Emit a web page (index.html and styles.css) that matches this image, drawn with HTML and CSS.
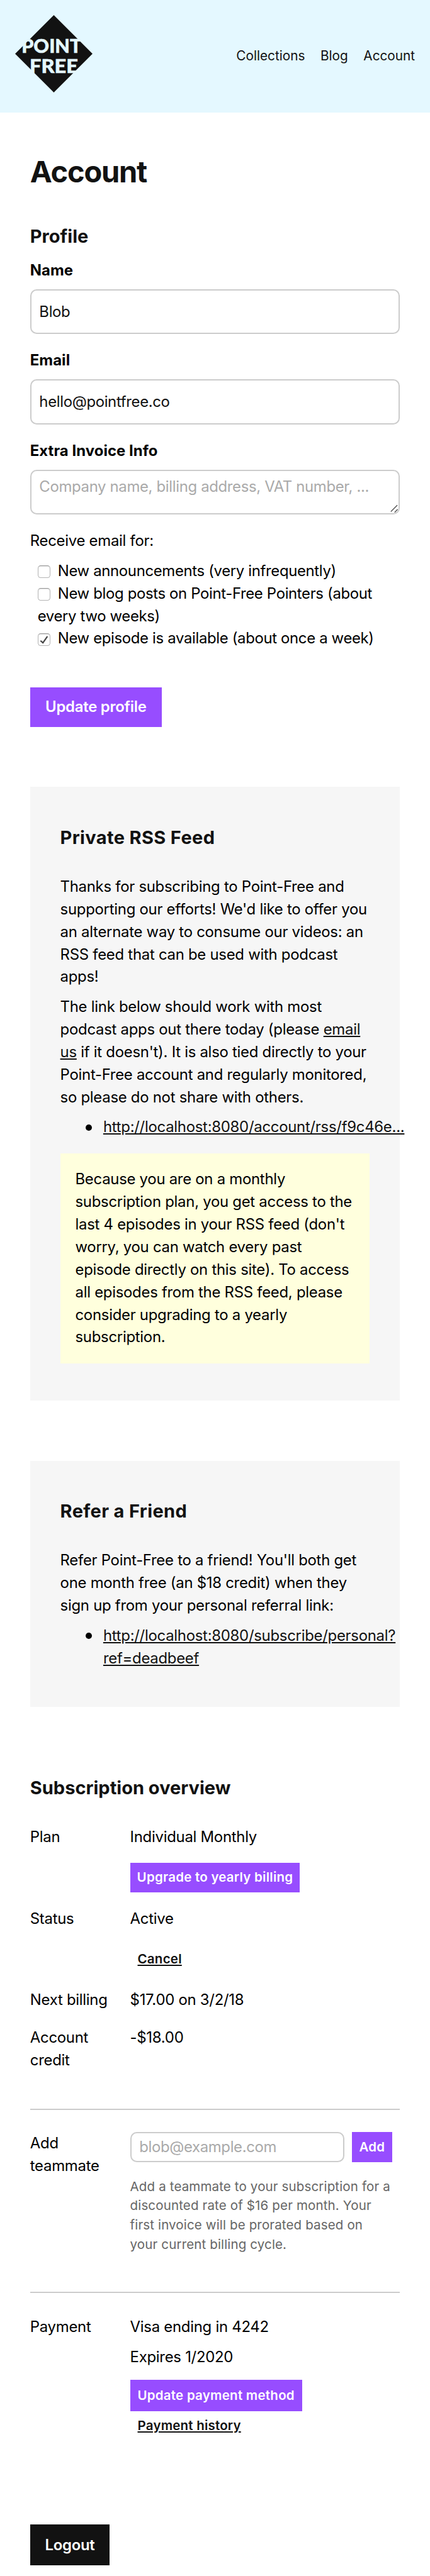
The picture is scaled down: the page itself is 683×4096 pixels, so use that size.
FILE: index.html
```html
<!DOCTYPE html>
<html lang="en">
<head>
<meta charset="utf-8">
<title>Account</title>
<link rel="stylesheet" href="styles.css">
</head>
<body>
<header class="header">
  <svg class="logo" viewBox="0 0 144 144" aria-label="Point-Free">
    <path class="logo-diamond" d="M72 0L144 72L72 144L0 72Z"/>
    <text class="logo-text" x="12" y="70.7" textLength="111.5" lengthAdjust="spacingAndGlyphs">POINT</text>
    <text class="logo-text" x="27" y="107.3" textLength="90" lengthAdjust="spacingAndGlyphs">FREE</text>
  </svg>
  <nav class="nav"><a>Collections</a><a>Blog</a><a>Account</a></nav>
</header>
<main class="main">
  <h1 class="title">Account</h1>
  <h2 class="heading">Profile</h2>
  <form class="form">
    <label class="label" for="name">Name</label>
    <input class="input" id="name" value="Blob">
    <label class="label" for="email">Email</label>
    <input class="input" id="email" value="hello@pointfree.co">
    <label class="label" for="info">Extra Invoice Info</label>
    <div class="textarea"><span>Company name, billing address, VAT number, ...</span>
      <svg class="grip" viewBox="0 0 16 16"><path d="M3.300 14.700L15.300 2.700M10.300 16L16 10.300"/></svg>
    </div>
    <p class="receive">Receive email for:</p>
    <div class="checks">
      <label class="check-row"><span class="check"></span> New announcements (very infrequently)</label>
      <label class="check-row"><span class="check"></span> New blog posts on Point-Free Pointers (about every two weeks)</label>
      <label class="check-row"><span class="check"><svg viewBox="1 1 22 22"><path d="M5 14L9.700 18L18.300 5.700"/></svg></span> New episode is available (about once a week)</label>
    </div>
    <button class="button" type="button">Update profile</button>
  </form>

  <section class="card">
    <h2 class="heading">Private RSS Feed</h2>
    <p>Thanks for subscribing to Point-Free and supporting our efforts! We'd like to offer you an alternate way to consume our videos: an RSS feed that can be used with podcast apps!</p>
    <p>The link below should work with most podcast apps out there today (please <a class="link">email us</a> if it doesn't). It is also tied directly to your Point-Free account and regularly monitored, so please do not share with others.</p>
    <ul class="links"><li><a class="link">http://localhost:8080/account/rss/f9c46e...</a></li></ul>
    <p class="notice">Because you are on a monthly subscription plan, you get access to the last 4 episodes in your RSS feed (don't worry, you can watch every past episode directly on this site). To access all episodes from the RSS feed, please consider upgrading to a yearly subscription.</p>
  </section>

  <section class="card">
    <h2 class="heading">Refer a Friend</h2>
    <p>Refer Point-Free to a friend! You'll both get one month free (an $18 credit) when they sign up from your personal referral link:</p>
    <ul class="links"><li><a class="link">http://localhost:8080/subscribe/personal?<br>ref=deadbeef</a></li></ul>
  </section>

  <section class="subscription">
    <h2 class="heading">Subscription overview</h2>
    <div class="rows">
      <div class="row"><div>Plan</div><div>
        <p>Individual Monthly</p>
        <button class="button small upgrade" type="button">Upgrade to yearly billing</button>
      </div></div>
      <div class="row"><div>Status</div><div>
        <p>Active</p>
        <button class="button small text" type="button">Cancel</button>
      </div></div>
      <div class="row"><div>Next billing</div><div>$17.00 on 3/2/18</div></div>
      <div class="row"><div>Account credit</div><div>-$18.00</div></div>
    </div>
    <div class="rows ruled">
      <div class="row"><div>Add teammate</div><div>
        <div class="invite">
          <input class="input input-small" placeholder="blob@example.com">
          <button class="button small add" type="button">Add</button>
        </div>
        <p class="hint">Add a teammate to your subscription for a discounted rate of $16 per month. Your first invoice will be prorated based on your current billing cycle.</p>
      </div></div>
    </div>
    <div class="rows ruled payment">
      <div class="row"><div>Payment</div><div>
        <p>Visa ending in 4242</p>
        <p class="expires">Expires 1/2020</p>
        <button class="button small update" type="button">Update payment method</button>
        <a class="history link">Payment history</a>
      </div></div>
    </div>
  </section>
  <button class="button logout" type="button">Logout</button>
</main>
</body>
</html>
```
FILE: styles.css
```css
html {
  font-size: 27.32px;
}

* {
  box-sizing: border-box;
}

body {
  margin: 0;
  background: #fff;
  color: #000;
  font: .875rem/1.3125rem Inter, "Liberation Sans", sans-serif;
  letter-spacing: -.011em;
}

h1, h2, p, ul {
  margin: 0;
}

.header {
  display: flex;
  justify-content: space-between;
  height: 6.5625rem;
  padding: .875rem;
  background: #e4f8ff;
}

.logo {
  width: 4.5rem;
  height: 4.5rem;
}

.logo-diamond {
  fill: #121212;
}

.logo-text {
  fill: #e4f8ff;
  stroke: #e4f8ff;
  stroke-width: .6;
  font: 900 35px Lato, sans-serif;
  letter-spacing: 0;
}

.nav {
  display: flex;
  gap: .9rem;
  padding-top: 1.82rem;
  color: #121212;
  font-size: .76rem;
  line-height: 1.125rem;
  letter-spacing: 0;
}

.main {
  padding: 2.333rem 1.75rem 0;
}

.title {
  color: #121212;
  font-size: 1.72rem;
  font-weight: 700;
  line-height: 2.1875rem;
  letter-spacing: -.026em;
}

.heading {
  color: #121212;
  font-size: 1.0625rem;
  font-weight: 700;
  line-height: 1.40625rem;
  letter-spacing: 0;
}

.title + .heading {
  margin-top: 1.98rem;
}

.form {
  padding-top: .61rem;
}

.label {
  display: block;
  margin-bottom: .4375rem;
  font-weight: 700;
  letter-spacing: .002em;
}

.input,
.textarea {
  display: block;
  width: 100%;
  height: 2.625rem;
  margin: 0 0 .875rem;
  padding: 0 .46rem;
  border: 2px solid #ccc;
  border-radius: .375rem;
  background: #fff;
  color: #121212;
  font: inherit;
  letter-spacing: -.014em;
  outline: none;
}

.textarea {
  position: relative;
  padding-top: .28rem;
  color: #aaa;
}

.grip {
  position: absolute;
  right: .06rem;
  bottom: .06rem;
  width: .5rem;
  height: .5rem;
  fill: none;
  stroke: #555;
  stroke-width: 1.7;
}

.input::placeholder {
  color: #aaa;
  opacity: 1;
}

.receive {
  margin-bottom: .4375rem;
}

.checks {
  padding-left: .4375rem;
  letter-spacing: -.014em;
}

.check-row {
  display: block;
}

.check {
  display: inline-block;
  width: .74rem;
  height: .74rem;
  margin-right: .2rem;
  border: 1px solid #b4b4b4;
  border-top-color: #999;
  border-radius: .17rem;
  box-shadow: inset 0 1px 1px #ddd;
  vertical-align: -.125rem;
}

.check svg {
  display: block;
  width: 100%;
  height: 100%;
  fill: none;
  stroke: #444;
  stroke-width: 2.6;
}

.button {
  display: block;
  height: 2.3125rem;
  padding: 0;
  border: 0;
  background: #974dff;
  color: #fff;
  font: 600 .875rem/1.3125rem Inter, "Liberation Sans", sans-serif;
  letter-spacing: -.01em;
  text-align: center;
}

.form .button {
  width: 7.656rem;
  margin-top: 2.17rem;
}

.card {
  margin-top: 3.5rem;
  padding: 2.25rem 1.75rem 2.16rem;
  background: #f6f6f6;
}

.card .heading {
  margin-bottom: 1.49rem;
  letter-spacing: .012em;
}

.card p + p {
  margin-top: .4375rem;
}

.link {
  color: #121212;
  text-decoration: underline;
}

.links {
  margin-top: .4375rem;
  padding-left: 2.5rem;
  list-style: none;
  white-space: nowrap;
}

.links li::before {
  content: "";
  display: inline-block;
  width: .375rem;
  height: .375rem;
  margin: 0 .66rem 0 -1.035rem;
  border-radius: 50%;
  background: #000;
  vertical-align: .1rem;
}

.notice {
  margin-top: .85rem;
  padding: .875rem;
  background: #ffffdd;
}

.subscription {
  padding-top: 4.05rem;
}

.rows {
  display: grid;
  gap: .875rem;
}

.heading + .rows {
  margin-top: 1.48rem;
}

.row {
  display: grid;
  grid-template-columns: 4.9375rem 1fr;
  column-gap: .875rem;
}

.ruled {
  margin-top: 2.15rem;
  padding-top: 1.29rem;
  border-top: 2px solid #ccc;
}

.payment {
  margin-top: 2.19rem;
  padding-top: 1.32rem;
}

.small {
  height: 1.7rem;
  font-size: .75rem;
  letter-spacing: .012em;
}

.upgrade {
  width: 9.875rem;
  margin-top: .85rem;
}

.text {
  margin-top: .87rem;
  padding: 0 .4375rem;
  background: none;
  color: #121212;
  text-decoration: underline;
}

.invite {
  display: flex;
  gap: .45rem;
}

.input-small {
  width: 12.45rem;
  height: 1.75rem;
  margin: 0;
}

.add {
  width: 2.34rem;
  height: 1.75rem;
}

.hint {
  margin-top: .875rem;
  padding-right: .4375rem;
  color: #666;
  font-size: .75rem;
  line-height: 1.125rem;
  letter-spacing: .0075em;
}

.expires {
  margin-top: .4375rem;
}

.update {
  width: 10rem;
  height: 1.8125rem;
  margin-top: .67rem;
}

.history {
  display: block;
  padding: .3rem 0 0 .4375rem;
  font-size: .75rem;
  font-weight: 600;
  line-height: 1.125rem;
  letter-spacing: .01em;
}

.logout {
  width: 4.625rem;
  height: 2.375rem;
  margin-top: 5.17rem;
  background: #121212;
}
```
